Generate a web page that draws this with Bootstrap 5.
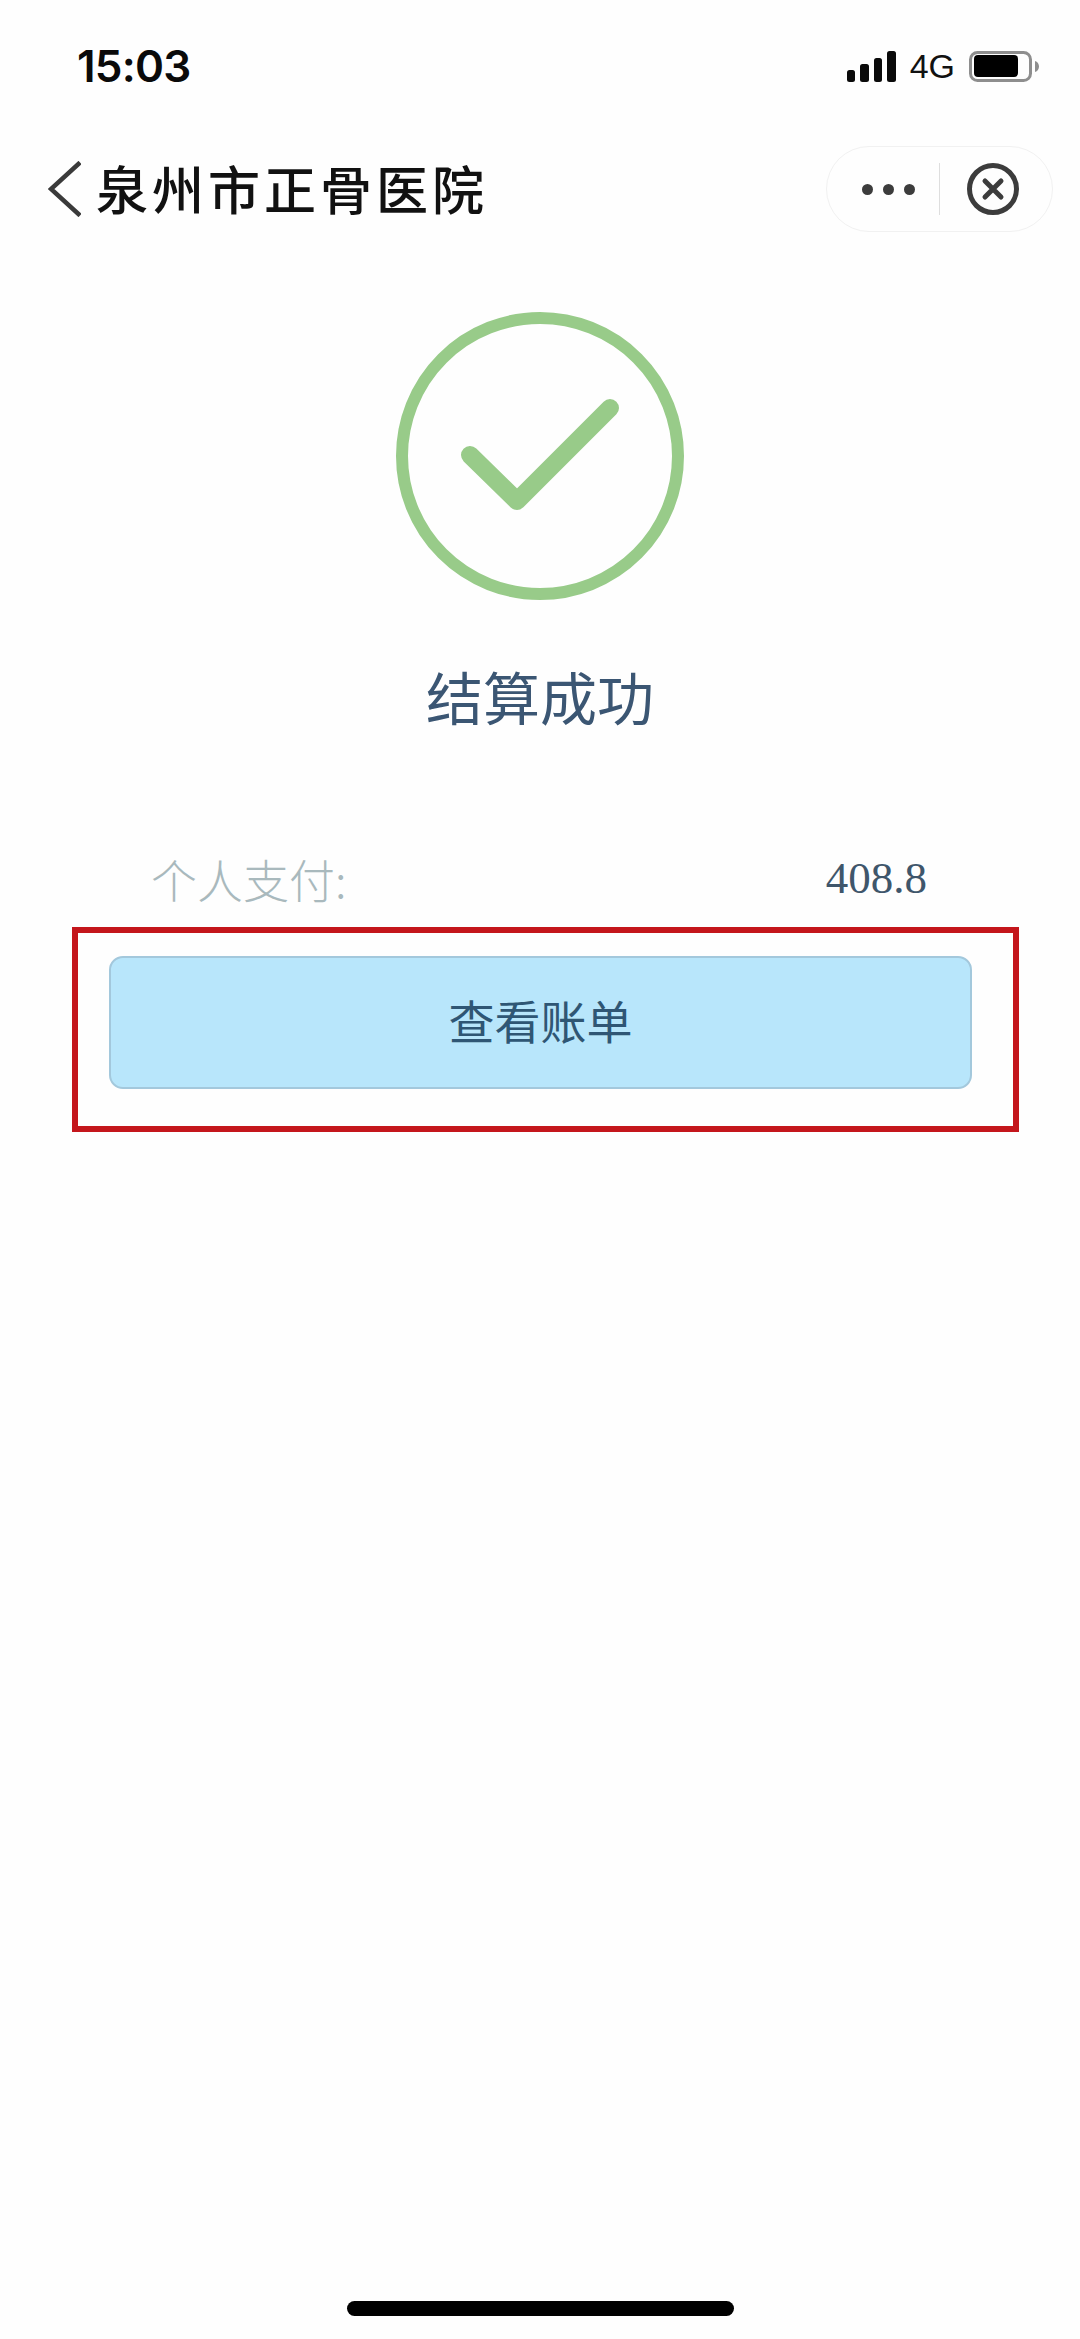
<!DOCTYPE html>
<html lang="zh">
<head>
    <meta charset="utf-8">
    <title>结算成功</title>
    <link href="https://cdn.jsdelivr.net/npm/bootstrap@5.3.0/dist/css/bootstrap.min.css" rel="stylesheet">
    <style>
        body {
            background: #fefefe;
            font-family: "Noto Sans CJK SC", "Liberation Sans", sans-serif;
        }
        .screen { width: 1080px; height: 2339px; }
        .status-row { height: 44px; margin-top: 44px; padding: 0 41px 0 77px; }
        .status-time { font-family: Inter, "Liberation Sans", sans-serif; font-size: 44px; font-weight: 600; line-height: 44px; color: #0a0a0a; letter-spacing: -0.8px; }
        .status-net { font-family: "Liberation Sans", sans-serif; font-size: 34px; line-height: 44px; color: #111; margin: 0 14px; }
        .nav-row { height: 86px; margin-top: 58px; padding: 0 27px 0 48px; }
        .nav-title { font-size: 52px; font-weight: 500; line-height: 60px; letter-spacing: 4px; color: #111; margin-left: 15px; margin-top: -2px; }
        .capsule { width: 227px; height: 86px; border: 1px solid #f1f1f1; border-radius: 43px; }
        .capsule-more { width: 113px; padding-left: 10px; gap: 10px; }
        .capsule-close { width: 113px; padding-right: 6px; }
        .capsule-line { width: 1px; height: 52px; background: #dedede; }
        .capsule-dot { width: 11px; height: 11px; border-radius: 50%; background: #3c3c3c; }
        .result-icon { margin-top: 80px; }
        .result-title { margin: 66px 0 0; font-size: 57px; font-weight: 400; line-height: 58px; color: #3b5673; }
        .pay-row { margin-top: 131px; padding: 0 153px 0 151px; line-height: 46px; }
        .pay-label { font-size: 46px; font-weight: 300; color: #a9b9bd; }
        .pay-value { font-family: "Liberation Serif", serif; font-size: 45px; color: #3f566b; }
        .mark-box { width: 947px; height: 205px; margin: 26px 0 0 72px; padding: 23px 41px 23px 31px; border: 6px solid #c4161c; }
        .bill-btn { height: 133px; padding-bottom: 14px; font-size: 46px; font-weight: 400; line-height: 1; color: #2f5674; background: #b8e6fb; border: 2px solid #a3c8dc; border-radius: 14px; }
        .bill-btn:hover { color: #2f5674; background: #b8e6fb; border-color: #a3c8dc; }
        .home-bar { width: 387px; height: 15px; margin-bottom: 23px; border-radius: 8px; background: #000; }
    </style>
</head>
<body>
    <div class="screen d-flex flex-column">
        <!-- status bar -->
        <div class="status-row d-flex justify-content-between align-items-center">
            <span class="status-time">15:03</span>
            <div class="d-flex align-items-center">
                <svg width="49" height="31" viewBox="0 0 49 31">
                    <rect x="0" y="19" width="8" height="12" rx="2.5" fill="#0a0a0a"/>
                    <rect x="13" y="13" width="9" height="18" rx="2.5" fill="#0a0a0a"/>
                    <rect x="27" y="7" width="8" height="24" rx="2.5" fill="#0a0a0a"/>
                    <rect x="40" y="0" width="9" height="31" rx="2.5" fill="#0a0a0a"/>
                </svg>
                <span class="status-net">4G</span>
                <svg width="70" height="31" viewBox="0 0 70 31">
                    <rect x="1.5" y="1.5" width="60" height="28" rx="7" fill="none" stroke="#8e8e8e" stroke-width="3"/>
                    <rect x="5" y="4" width="44" height="22" rx="4" fill="#000"/>
                    <path d="M66 10c2.500 .5 4 3 4 5.500s-1.500 5-4 5.500z" fill="#8e8e8e"/>
                </svg>
            </div>
        </div>

        <!-- mini program nav -->
        <div class="nav-row d-flex justify-content-between align-items-center">
            <div class="d-flex align-items-center">
                <svg width="33" height="56" viewBox="0 0 33 56">
                    <path d="M32 1.500 3 28l29 26.500" fill="none" stroke="#3a3a3a" stroke-width="4.500"/>
                </svg>
                <span class="nav-title">泉州市正骨医院</span>
            </div>
            <div class="capsule d-flex align-items-center">
                <div class="capsule-more d-flex justify-content-center">
                    <span class="capsule-dot"></span>
                    <span class="capsule-dot"></span>
                    <span class="capsule-dot"></span>
                </div>
                <span class="capsule-line"></span>
                <div class="capsule-close d-flex justify-content-center">
                    <svg width="52" height="52" viewBox="0 0 52 52">
                        <circle cx="26" cy="26" r="23.500" fill="none" stroke="#3c3c3c" stroke-width="5"/>
                        <path d="M18 18l16 16M34 18 18 34" fill="none" stroke="#3c3c3c" stroke-width="5" stroke-linecap="round"/>
                    </svg>
                </div>
            </div>
        </div>

        <!-- result -->
        <div class="result-icon d-flex justify-content-center">
            <svg width="288" height="288" viewBox="0 0 288 288">
                <circle cx="144" cy="144" r="138" fill="none" stroke="#98cb89" stroke-width="12"/>
                <path d="M74 143l47 46 93-93" fill="none" stroke="#98cb89" stroke-width="18" stroke-linecap="round" stroke-linejoin="round"/>
            </svg>
        </div>
        <h1 class="result-title text-center">结算成功</h1>

        <div class="pay-row d-flex justify-content-between">
            <span class="pay-label">个人支付:</span>
            <span class="pay-value">408.8</span>
        </div>

        <div class="mark-box">
            <button type="button" class="btn bill-btn w-100">查看账单</button>
        </div>

        <div class="home-bar mt-auto mx-auto"></div>
    </div>
    <script src="https://cdn.jsdelivr.net/npm/bootstrap@5.3.0/dist/js/bootstrap.bundle.min.js"></script>
</body>
</html>
